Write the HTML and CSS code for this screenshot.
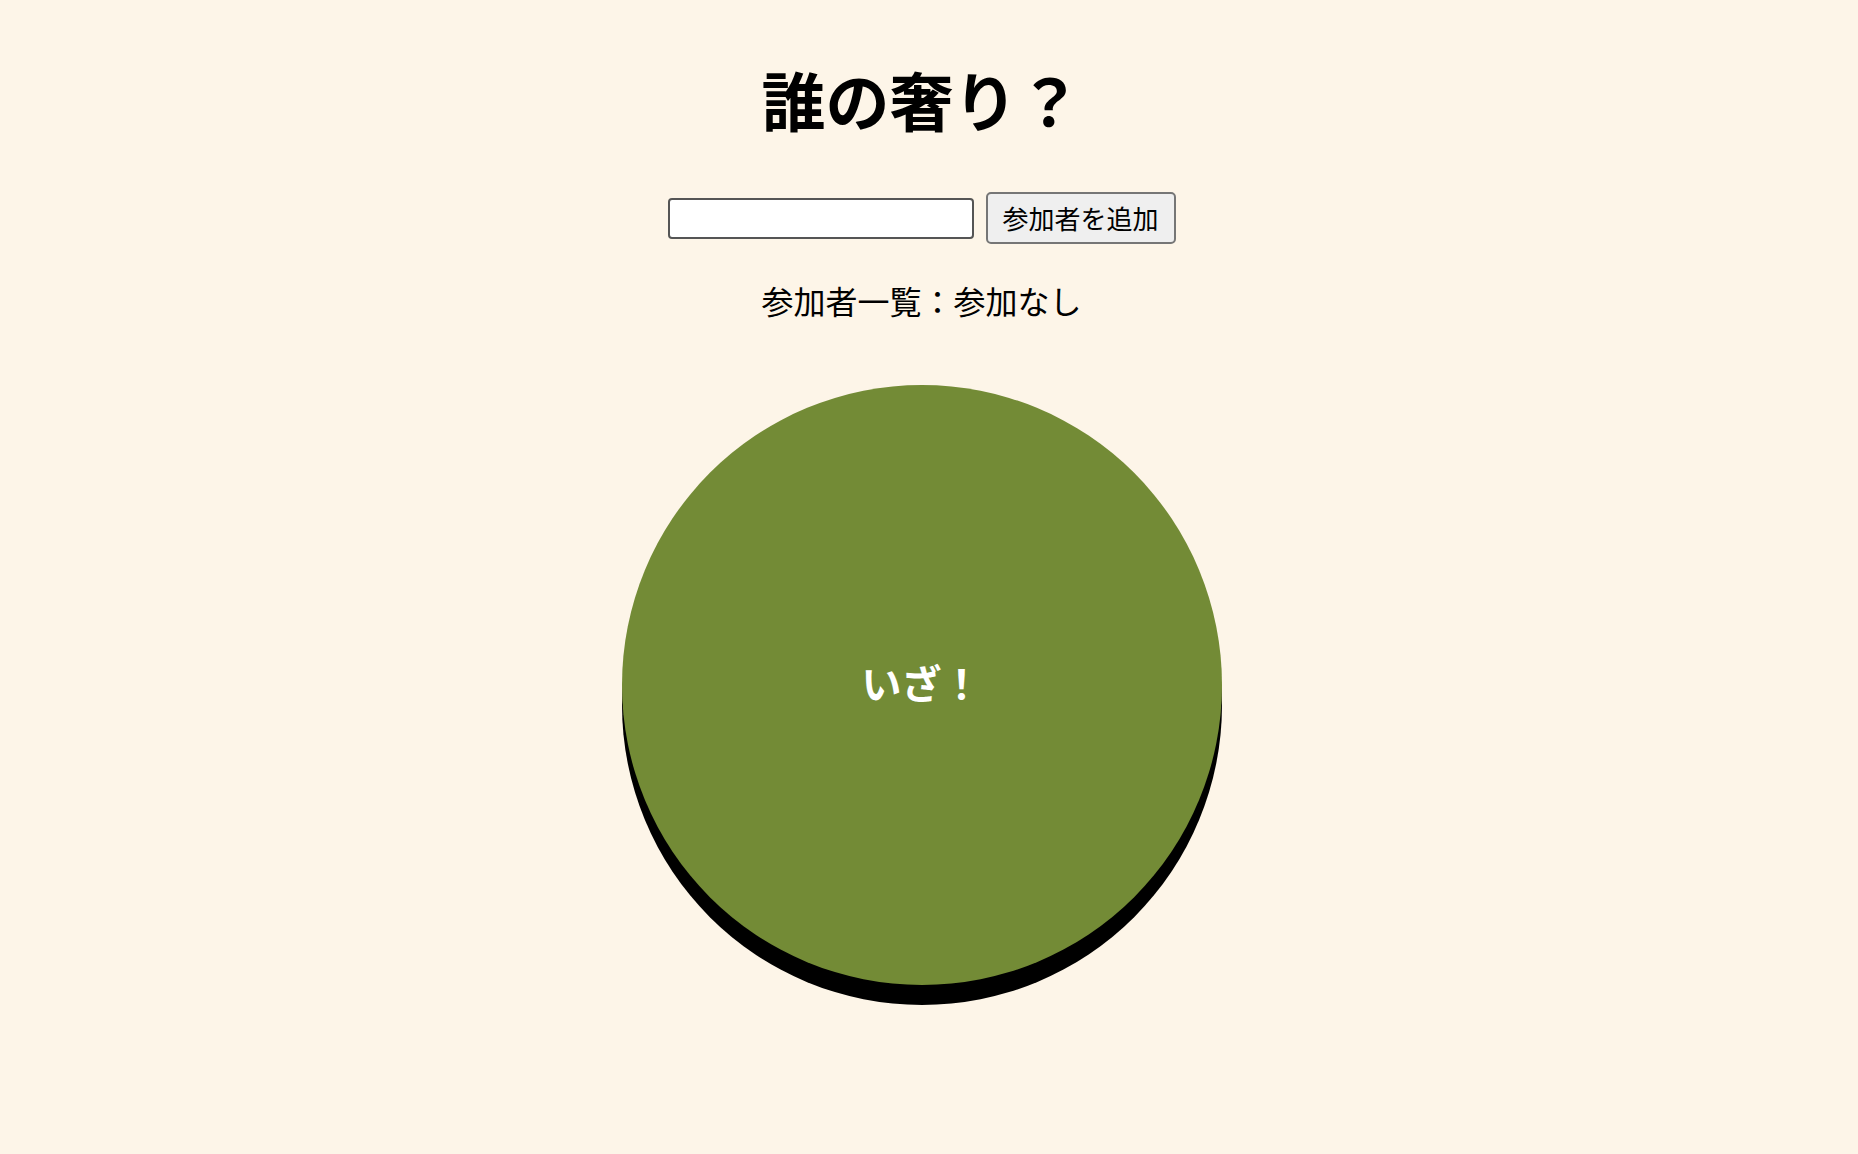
FILE: index.html
```html
<!DOCTYPE html>
<html lang="ja">
<head>
<meta charset="utf-8">
<title>誰の奢り？</title>
<link rel="stylesheet" href="styles.css">
</head>
<body>
<main class="app">
  <h1 class="title">誰の奢り？</h1>
  <div class="add-row">
    <input class="name-input" type="text">
    <button class="add-btn" type="button">参加者を追加</button>
  </div>
  <p class="members">参加者一覧：参加なし</p>
  <div class="go-base">
    <button class="go-btn" type="button">いざ！</button>
  </div>
</main>
</body>
</html>
```

FILE: styles.css
```css
html, body {
  margin: 0;
  padding: 0;
}
body {
  background: #fdf5e8;
  font-family: "Noto Sans CJK JP", "Noto Sans", sans-serif;
  color: #000;
}
.app {
  width: calc(100% - 15px);
  display: flex;
  flex-direction: column;
  align-items: center;
  padding-bottom: 80px;
}
.title {
  margin: 66px 0 0;
  font-size: 64px;
  line-height: 64px;
  font-weight: 700;
}
.add-row {
  margin-top: 62px;
  display: flex;
  align-items: center;
  gap: 12px;
}
.name-input {
  box-sizing: border-box;
  width: 306px;
  height: 41px;
  border: 2px solid #555;
  border-radius: 4px;
  background: #fff;
  padding: 2px 6px;
  font-size: 26px;
  margin: 0;
}
.add-btn {
  box-sizing: border-box;
  height: 52px;
  width: 190px;
  border: 2px solid #767676;
  border-radius: 5px;
  background: #efefef;
  font-family: "Noto Sans CJK JP", sans-serif;
  font-size: 26px;
  line-height: 1;
  color: #000;
  padding: 0 12px;
  margin: 0;
}
.members {
  margin: 40px 0 0;
  font-size: 32px;
  line-height: 32px;
}
.go-base {
  margin-top: 69px;
  width: 600px;
  height: 620px;
  position: relative;
}
.go-base::before {
  content: "";
  position: absolute;
  left: 0;
  top: 20px;
  width: 600px;
  height: 600px;
  border-radius: 50%;
  background: #000;
}
.go-btn {
  position: relative;
  width: 600px;
  height: 600px;
  border: none;
  border-radius: 50%;
  background: #738b36;
  color: #fff;
  font-family: "Noto Sans CJK JP", sans-serif;
  font-size: 40px;
  font-weight: 700;
  padding: 0 0 6px;
  display: flex;
  align-items: center;
  justify-content: center;
}
```
